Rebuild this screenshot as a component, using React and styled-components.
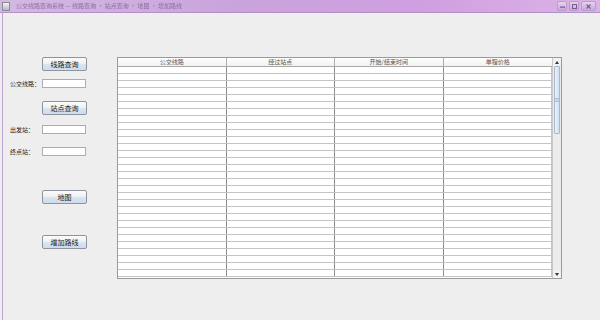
import React from 'react';
import styled, { createGlobalStyle } from 'styled-components';

const GlobalStyle = createGlobalStyle`
  html, body {
    margin: 0;
    padding: 0;
    background: #eeeeee;
  }
  body {
    font-family: 'Noto Sans CJK SC', 'Noto Sans', sans-serif;
  }
`;

const Window = styled.div`
  width: 600px;
  height: 320px;
  display: flex;
  flex-direction: column;
  background: #eeeeee;
  overflow: hidden;
`;

const TitleBar = styled.div`
  height: 12px;
  display: flex;
  align-items: center;
  padding: 0 4px 0 2px;
  background: linear-gradient(90deg, #d3b9e2 0%, #c9a3dc 40%, #cf9fe0 70%, #dcb2e6 100%);
  border-bottom: 1px solid #b590c8;
`;

const AppIcon = styled.div`
  width: 6px;
  height: 7px;
  background: linear-gradient(#f4f4f4, #b8b8c0);
  border: 1px solid #8a8a96;
  margin-right: 6px;
`;

const Caption = styled.div`
  flex: 1;
  font-size: 6px;
  line-height: 12px;
  color: #8f6da4;
  white-space: nowrap;
  overflow: hidden;
  filter: blur(0.6px);
`;

const Controls = styled.div`
  display: flex;
  gap: 2px;
  align-items: center;
`;

const CtrlButton = styled.div`
  width: ${p => p.$w}px;
  height: 8px;
  display: flex;
  align-items: center;
  justify-content: center;
  border: 1px solid #b89ccc;
  border-radius: 2px;
  background: linear-gradient(#e6d4ee, #c7a8d8);
`;

const Body = styled.div`
  flex: 1;
  display: flex;
  margin-left: 2px;
  border-left: 1px solid #bfa3d0;
`;

const Side = styled.div`
  width: 114px;
  padding: 44px 0 0 7px;
  box-sizing: border-box;
  display: flex;
  flex-direction: column;
`;

const Row = styled.div`
  display: flex;
  align-items: center;
  margin-top: ${p => p.$top}px;
  height: ${p => p.$h}px;
`;

const Label = styled.span`
  width: 32px;
  font-size: 6px;
  line-height: 9px;
  color: #222;
  white-space: nowrap;
`;

const Field = styled.input`
  width: 44px;
  height: 9px;
  box-sizing: border-box;
  border: 1px solid #a8adb6;
  background: #fff;
  padding: 0;
  margin: 0;
  outline: none;
`;

const Button = styled.button`
  margin-left: 32px;
  width: 45px;
  height: 14px;
  padding: 0;
  box-sizing: border-box;
  border: 1px solid #8d949e;
  border-radius: 2px;
  background: linear-gradient(#fbfbfb 0%, #eef2f7 45%, #d9e4f0 55%, #cfdcec 100%);
  font-family: 'Noto Sans CJK SC', sans-serif;
  font-size: 7px;
  line-height: 12px;
  color: #1a1a1a;
`;

const TableWrap = styled.div`
  margin-top: 44px;
  width: 445px;
  height: 222px;
  display: flex;
  border: 1px solid #9a9a9a;
  box-sizing: border-box;
  background: #fff;
`;

const Grid = styled.div`
  flex: 1;
  display: flex;
  flex-direction: column;
`;

const Header = styled.div`
  display: grid;
  grid-template-columns: repeat(4, 1fr);
  height: 8px;
  background: linear-gradient(#ffffff, #f1f1f1);
  border-bottom: 1px solid #a9a9a9;
`;

const HeadCell = styled.div`
  font-size: 6px;
  line-height: 8px;
  text-align: center;
  color: #555;
  border-right: 1px solid #b0b0b0;
  white-space: nowrap;
  overflow: hidden;
  &:last-child { border-right: none; }
`;

const DataRow = styled.div`
  display: grid;
  grid-template-columns: repeat(4, 1fr);
  height: 7px;
  box-sizing: border-box;
  border-bottom: 1px solid #c4c4c4;
`;

const Cell = styled.div`
  border-right: 1px solid #8c8c8c;
  &:last-child { border-right: 1px solid #c4c4c4; }
`;

const ScrollBar = styled.div`
  width: 8px;
  display: flex;
  flex-direction: column;
  background: #ececec;
  border-left: 1px solid #c8c8c8;
`;

const Arrow = styled.div`
  height: 8px;
  display: flex;
  align-items: center;
  justify-content: center;
  background: #f2f2f2;
`;

const Thumb = styled.div`
  height: 66px;
  margin: 0 1px;
  border: 1px solid #a7b8cf;
  border-radius: 1px;
  background: linear-gradient(90deg, #e9f1fb, #d2e0f1);
  display: flex;
  align-items: center;
  justify-content: center;
`;

const Track = styled.div`
  flex: 1;
`;

const columns = ['公交线路', '经过站点', '开始/结束时间', '单程价格'];
const rows = Array.from({ length: 30 }, (_, i) => i);

function App() {
  return (
    <>
      <GlobalStyle />
      <Window>
        <TitleBar>
          <AppIcon />
          <Caption>公交线路查询系统 — 线路查询 · 站点查询 · 地图 · 增加路线</Caption>
          <Controls>
            <CtrlButton $w={8}>
              <svg width="5" height="3" viewBox="0 0 5 3"><rect x="0" y="1.5" width="5" height="1.2" fill="#7a5a8c" /></svg>
            </CtrlButton>
            <CtrlButton $w={8}>
              <svg width="5" height="5" viewBox="0 0 5 5"><rect x="0.5" y="0.5" width="4" height="4" fill="none" stroke="#7a5a8c" /></svg>
            </CtrlButton>
            <CtrlButton $w={13}>
              <svg width="5" height="5" viewBox="0 0 5 5"><path d="M0.5 0.5 L4.5 4.5 M4.5 0.5 L0.5 4.5" stroke="#7a5a8c" strokeWidth="1.1" /></svg>
            </CtrlButton>
          </Controls>
        </TitleBar>
        <Body>
          <Side>
            <Row $top={0} $h={14}><Button type="button">线路查询</Button></Row>
            <Row $top={8} $h={9}><Label>公交线路：</Label><Field /></Row>
            <Row $top={13} $h={14}><Button type="button">站点查询</Button></Row>
            <Row $top={10} $h={9}><Label>出发站：</Label><Field /></Row>
            <Row $top={13} $h={9}><Label>终点站：</Label><Field /></Row>
            <Row $top={34} $h={14}><Button type="button">地图</Button></Row>
            <Row $top={31} $h={14}><Button type="button">增加路线</Button></Row>
          </Side>
          <TableWrap>
            <Grid>
              <Header>
                {columns.map(c => <HeadCell key={c}>{c}</HeadCell>)}
              </Header>
              {rows.map(r => (
                <DataRow key={r}>
                  {columns.map(c => <Cell key={c} />)}
                </DataRow>
              ))}
            </Grid>
            <ScrollBar>
              <Arrow>
                <svg width="4" height="3" viewBox="0 0 4 3"><path d="M0 3 L2 0 L4 3 Z" fill="#333" /></svg>
              </Arrow>
              <Thumb>
                <svg width="4" height="4" viewBox="0 0 4 4"><path d="M0 0.5 H4 M0 2 H4 M0 3.5 H4" stroke="#8fa3bf" strokeWidth="0.6" /></svg>
              </Thumb>
              <Track />
              <Arrow>
                <svg width="4" height="3" viewBox="0 0 4 3"><path d="M0 0 L2 3 L4 0 Z" fill="#333" /></svg>
              </Arrow>
            </ScrollBar>
          </TableWrap>
        </Body>
      </Window>
    </>
  );
}

export default App;
